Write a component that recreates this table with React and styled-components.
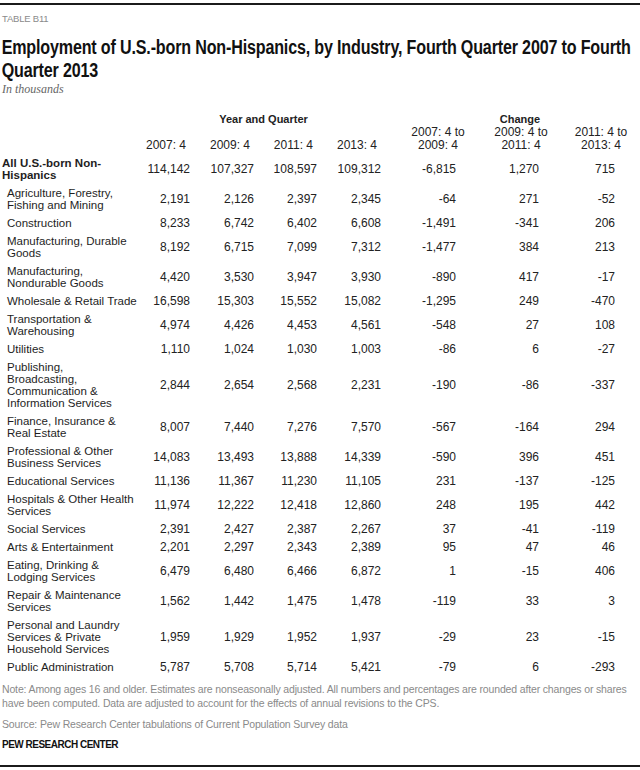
import React from "react";
import styled, { createGlobalStyle } from "styled-components";

const GlobalStyle = createGlobalStyle`
    body {
        margin: 0;
        background: #fff;
        font-family: "Liberation Sans", Arial, sans-serif;
        color: #222;
        overflow: hidden;
    }
`;

const COLS = "136px 54px 64px 63px 64px 89px 84px 77px";
const CHANGE_PAD = [14, 15, 16];

const rows = [
    { label: ["All U.S.-born Non-", "Hispanics"], total: true, v: ["114,142", "107,327", "108,597", "109,312", "-6,815", "1,270", "715"] },
    { label: ["Agriculture, Forestry,", "Fishing and Mining"], v: ["2,191", "2,126", "2,397", "2,345", "-64", "271", "-52"] },
    { label: ["Construction"], v: ["8,233", "6,742", "6,402", "6,608", "-1,491", "-341", "206"] },
    { label: ["Manufacturing, Durable", "Goods"], v: ["8,192", "6,715", "7,099", "7,312", "-1,477", "384", "213"] },
    { label: ["Manufacturing,", "Nondurable Goods"], v: ["4,420", "3,530", "3,947", "3,930", "-890", "417", "-17"] },
    { label: ["Wholesale & Retail Trade"], v: ["16,598", "15,303", "15,552", "15,082", "-1,295", "249", "-470"] },
    { label: ["Transportation &", "Warehousing"], v: ["4,974", "4,426", "4,453", "4,561", "-548", "27", "108"] },
    { label: ["Utilities"], v: ["1,110", "1,024", "1,030", "1,003", "-86", "6", "-27"] },
    { label: ["Publishing,", "Broadcasting,", "Communication &", "Information Services"], v: ["2,844", "2,654", "2,568", "2,231", "-190", "-86", "-337"] },
    { label: ["Finance, Insurance &", "Real Estate"], v: ["8,007", "7,440", "7,276", "7,570", "-567", "-164", "294"] },
    { label: ["Professional & Other", "Business Services"], v: ["14,083", "13,493", "13,888", "14,339", "-590", "396", "451"] },
    { label: ["Educational Services"], v: ["11,136", "11,367", "11,230", "11,105", "231", "-137", "-125"] },
    { label: ["Hospitals & Other Health", "Services"], v: ["11,974", "12,222", "12,418", "12,860", "248", "195", "442"] },
    { label: ["Social Services"], v: ["2,391", "2,427", "2,387", "2,267", "37", "-41", "-119"] },
    { label: ["Arts & Entertainment"], v: ["2,201", "2,297", "2,343", "2,389", "95", "47", "46"] },
    { label: ["Eating, Drinking &", "Lodging Services"], v: ["6,479", "6,480", "6,466", "6,872", "1", "-15", "406"] },
    { label: ["Repair & Maintenance", "Services"], v: ["1,562", "1,442", "1,475", "1,478", "-119", "33", "3"] },
    { label: ["Personal and Laundry", "Services & Private", "Household Services"], v: ["1,959", "1,929", "1,952", "1,937", "-29", "23", "-15"] },
    { label: ["Public Administration"], v: ["5,787", "5,708", "5,714", "5,421", "-79", "6", "-293"] },
];

const changeHeads = [
    { lines: ["2007: 4 to", "2009: 4"], shift: 2 },
    { lines: ["2009: 4 to", "2011: 4"], shift: 3 },
    { lines: ["2011: 4 to", "2013: 4"], shift: 0 },
];

const Page = styled.div`
    width: 640px;
    height: 764px;
    margin-top: 3px;
    box-sizing: border-box;
    border-top: 2px solid #1b1b1b;
    border-bottom: 2px solid #1b1b1b;
    display: flex;
    flex-direction: column;
    overflow: hidden;
`;

const Kicker = styled.div`
    margin-top: 8px;
    padding-left: 2px;
    font-size: 9.5px;
    letter-spacing: -0.2px;
    color: #8a8a8a;
`;

/* no condensed face is installed, so the bold sans is narrowed to match */
const Title = styled.h1`
    margin: 12px 0 0;
    padding-left: 2px;
    font-family: "Liberation Sans", Arial, sans-serif;
    font-weight: 700;
    font-size: 19.5px;
    line-height: 23px;
    letter-spacing: -0.2px;
    color: #111;
    white-space: nowrap;
    transform: scaleX(0.825);
    transform-origin: left top;
`;

const Subtitle = styled.div`
    margin-top: 0;
    padding-left: 2px;
    font-family: "Liberation Serif", serif;
    font-style: italic;
    font-size: 12px;
    line-height: 14px;
    color: #666;
`;

const Table = styled.div`
    margin-top: 16px;
    display: flex;
    flex-direction: column;
`;

const Row = styled.div`
    display: grid;
    grid-template-columns: ${COLS};
    align-items: ${(p) => p.$align || "center"};
    margin-bottom: ${(p) => p.$gap || 0}px;
`;

const GroupHead = styled.div`
    grid-column: ${(p) => p.$span};
    padding-left: ${(p) => p.$offset || 0}px;
    text-align: center;
    font-size: 11px;
    line-height: 14px;
    font-weight: 700;
    color: #222;
`;

const YearHead = styled.div`
    text-align: right;
    padding-right: 4px;
    font-size: 12px;
    line-height: 13px;
`;

const ChangeHead = styled.div`
    display: flex;
    justify-content: flex-end;
    padding-right: ${(p) => p.$shift}px;

    span {
        width: 60px;
        text-align: center;
        font-size: 12px;
        line-height: 13px;
    }
`;

const Label = styled.div`
    padding: 3px 0 3px ${(p) => (p.$total ? 2 : 7)}px;
    font-size: 11.5px;
    line-height: 12px;
    font-weight: ${(p) => (p.$total ? 700 : 400)};
    white-space: nowrap;
    color: #1e1e1e;
`;

const Num = styled.div`
    text-align: right;
    padding-right: ${(p) => p.$pad || 0}px;
    font-size: 12px;
    color: #222;
`;

const Notes = styled.div`
    margin-top: 6px;
    padding-left: 2px;
    font-size: 10.5px;
    line-height: 14px;
    letter-spacing: -0.15px;
    color: #8a8a8a;
`;

const Source = styled(Notes)`
    margin-top: 7px;
`;

const Brand = styled.div`
    margin-top: 8px;
    padding-left: 2px;
    font-size: 10px;
    font-weight: 700;
    letter-spacing: -0.5px;
    color: #111;
`;

export default function App() {
    return (
        <>
            <GlobalStyle />
            <Page>
                <Kicker>TABLE B11</Kicker>
                <Title>
                    Employment of U.S.-born Non-Hispanics, by Industry, Fourth Quarter 2007 to Fourth
                    <br />
                    Quarter 2013
                </Title>
                <Subtitle>In thousands</Subtitle>
                <Table>
                    <Row>
                        <GroupHead $span="2 / 6" $offset={10}>Year and Quarter</GroupHead>
                        <GroupHead $span="6 / 9" $offset={28}>Change</GroupHead>
                    </Row>
                    <Row $align="end" $gap={2}>
                        <div />
                        {["2007: 4", "2009: 4", "2011: 4", "2013: 4"].map((y) => (
                            <YearHead key={y}>{y}</YearHead>
                        ))}
                        {changeHeads.map(({ lines, shift }) => (
                            <ChangeHead key={lines[0]} $shift={shift}>
                                <span>
                                    {lines[0]}
                                    <br />
                                    {lines[1]}
                                </span>
                            </ChangeHead>
                        ))}
                    </Row>
                    {rows.map((r) => (
                        <Row key={r.label.join(" ")}>
                            <Label $total={r.total}>
                                {r.label.map((l, i) => (
                                    <div key={i}>{l}</div>
                                ))}
                            </Label>
                            {r.v.map((n, i) => (
                                <Num key={i} $pad={i > 3 ? CHANGE_PAD[i - 4] : 0}>
                                    {n}
                                </Num>
                            ))}
                        </Row>
                    ))}
                </Table>
                <Notes>
                    Note: Among ages 16 and older. Estimates are nonseasonally adjusted. All numbers and percentages are rounded after changes or shares
                    <br />
                    have been computed. Data are adjusted to account for the effects of annual revisions to the CPS.
                </Notes>
                <Source>Source: Pew Research Center tabulations of Current Population Survey data</Source>
                <Brand>PEW RESEARCH CENTER</Brand>
            </Page>
        </>
    );
}
